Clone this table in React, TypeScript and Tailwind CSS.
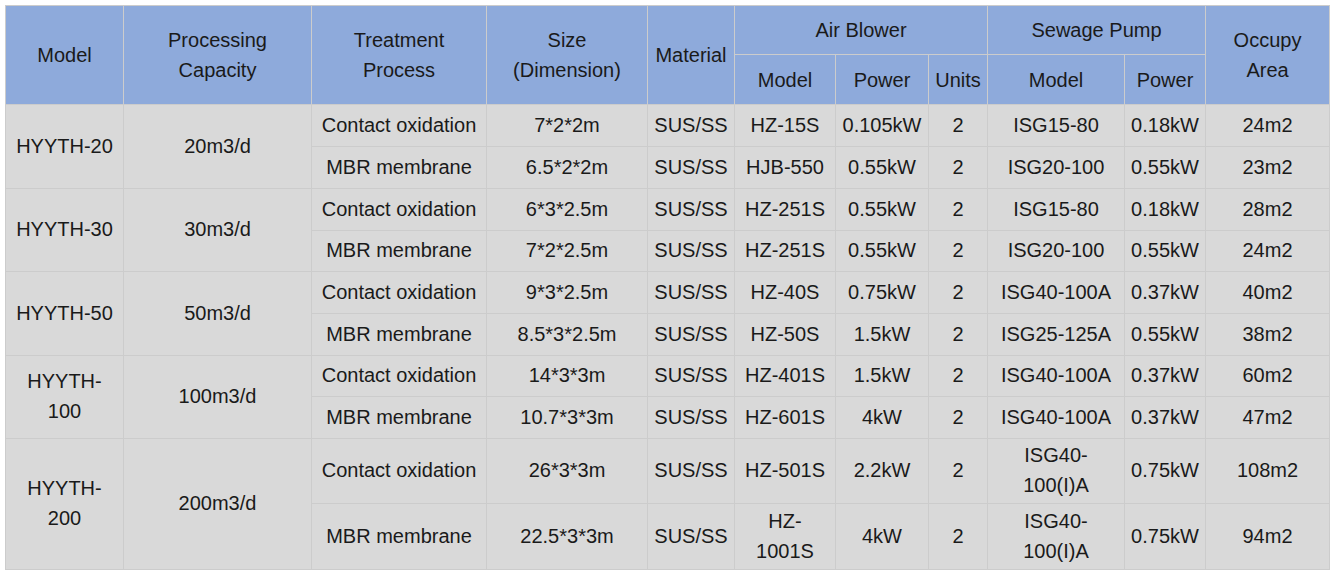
import React from "react";

type Cell = { t: React.ReactNode; h?: boolean; rs?: string; cs?: string };

const H = (t: React.ReactNode, rs?: string, cs?: string): Cell => ({ t, h: true, rs, cs });
const B = (t: React.ReactNode, rs?: string): Cell => ({ t, rs });

const br = (a: string, b: string) => (
  <>
    {a}
    <br />
    {b}
  </>
);

const header: Cell[] = [
  H("Model", "row-span-2"),
  H(br("Processing", "Capacity"), "row-span-2"),
  H(br("Treatment", "Process"), "row-span-2"),
  H(br("Size", "(Dimension)"), "row-span-2"),
  H("Material", "row-span-2"),
  H("Air Blower", undefined, "col-span-3"),
  H("Sewage Pump", undefined, "col-span-2"),
  H(br("Occupy", "Area"), "row-span-2"),
  H("Model"),
  H("Power"),
  H("Units"),
  H("Model"),
  H("Power"),
];

const groups: { model: React.ReactNode; cap: string; rows: React.ReactNode[][] }[] = [
  {
    model: "HYYTH-20",
    cap: "20m3/d",
    rows: [
      ["Contact oxidation", "7*2*2m", "SUS/SS", "HZ-15S", "0.105kW", "2", "ISG15-80", "0.18kW", "24m2"],
      ["MBR membrane", "6.5*2*2m", "SUS/SS", "HJB-550", "0.55kW", "2", "ISG20-100", "0.55kW", "23m2"],
    ],
  },
  {
    model: "HYYTH-30",
    cap: "30m3/d",
    rows: [
      ["Contact oxidation", "6*3*2.5m", "SUS/SS", "HZ-251S", "0.55kW", "2", "ISG15-80", "0.18kW", "28m2"],
      ["MBR membrane", "7*2*2.5m", "SUS/SS", "HZ-251S", "0.55kW", "2", "ISG20-100", "0.55kW", "24m2"],
    ],
  },
  {
    model: "HYYTH-50",
    cap: "50m3/d",
    rows: [
      ["Contact oxidation", "9*3*2.5m", "SUS/SS", "HZ-40S", "0.75kW", "2", "ISG40-100A", "0.37kW", "40m2"],
      ["MBR membrane", "8.5*3*2.5m", "SUS/SS", "HZ-50S", "1.5kW", "2", "ISG25-125A", "0.55kW", "38m2"],
    ],
  },
  {
    model: br("HYYTH-", "100"),
    cap: "100m3/d",
    rows: [
      ["Contact oxidation", "14*3*3m", "SUS/SS", "HZ-401S", "1.5kW", "2", "ISG40-100A", "0.37kW", "60m2"],
      ["MBR membrane", "10.7*3*3m", "SUS/SS", "HZ-601S", "4kW", "2", "ISG40-100A", "0.37kW", "47m2"],
    ],
  },
  {
    model: br("HYYTH-", "200"),
    cap: "200m3/d",
    rows: [
      ["Contact oxidation", "26*3*3m", "SUS/SS", "HZ-501S", "2.2kW", "2", br("ISG40-", "100(I)A"), "0.75kW", "108m2"],
      ["MBR membrane", "22.5*3*3m", "SUS/SS", br("HZ-", "1001S"), "4kW", "2", br("ISG40-", "100(I)A"), "0.75kW", "94m2"],
    ],
  },
];

const body: Cell[] = [];
groups.forEach((g) => {
  body.push(B(g.model, "row-span-2"));
  body.push(B(g.cap, "row-span-2"));
  g.rows[0].forEach((c) => body.push(B(c)));
  g.rows[1].forEach((c) => body.push(B(c)));
});

export default function App() {
  const cells = [...header, ...body];
  return (
    <div className="w-[1334px] h-[578px] bg-white p-[5px]" style={{ fontFamily: '"Liberation Sans", Arial, sans-serif' }}>
      <div className="inline-block bg-[#cccccc] p-px">
        <div className="grid gap-px grid-cols-[117px_187px_174px_160px_86px_100px_92px_58px_136px_80px_123px] grid-rows-[48px_49px_41px_41px_41px_40px_41px_41px_40px_41px_64px_65px]">
          {cells.map((c, i) => (
            <div
              key={i}
              className={`flex items-center justify-center text-center px-1 text-[20px] leading-[30px] text-[#1a1a1a] ${c.h ? "bg-[#8eaadb]" : "bg-[#d9d9d9] pb-[2px]"} ${c.rs ?? ""} ${c.cs ?? ""}`}
            >
              <div>{c.t}</div>
            </div>
          ))}
        </div>
      </div>
    </div>
  );
}
